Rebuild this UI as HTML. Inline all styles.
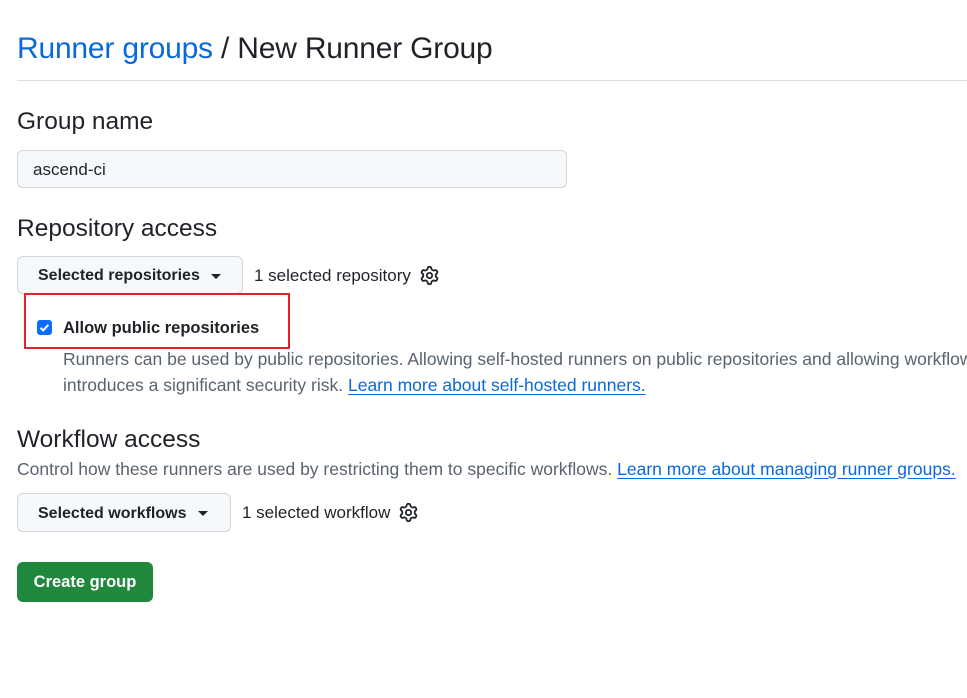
<!DOCTYPE html>
<html><head><style>
body{margin:0;width:967px;height:698px;overflow:hidden;background:#fff;font-family:"Liberation Sans",sans-serif;color:#1f2328;position:relative}
.a{position:absolute;white-space:nowrap}
a{color:#0969da;text-decoration:underline;text-underline-offset:3px}
.btn{position:absolute;background:#f6f8fa;border:1px solid #d0d7de;border-radius:6px;box-sizing:border-box;font-weight:bold;font-size:16px;display:flex;align-items:center;padding-left:20px;padding-top:2px}
.caret{display:inline-block;width:0;height:0;border-left:5px solid transparent;border-right:5px solid transparent;border-top:5px solid #1f2328;margin-left:11px}
.desc{color:#59636e;font-size:17.5px}
.h{font-size:24.5px}
</style></head><body>
<svg width="0" height="0" style="position:absolute"><defs><path id="g" fill="#1f2328" d="M8 0a8.2 8.2 0 0 1 .701.031C9.444.095 9.990.645 10.16 1.29l.288 1.107c.018.066.079.158.212.224.231.114.454.243.668.386.123.082.233.09.299.071l1.103-.303c.644-.176 1.392.021 1.820.63.27.385.506.792.704 1.218.315.675.111 1.422-.364 1.891l-.814.806c-.049.048-.098.147-.088.294.016.257.016.515 0 .772-.01.147.038.246.088.294l.814.806c.475.469.679 1.216.364 1.891a7.977 7.977 0 0 1-.704 1.217c-.428.61-1.176.807-1.820.63l-1.102-.302c-.067-.019-.177-.011-.3.071a5.909 5.909 0 0 1-.668.386c-.133.066-.194.158-.211.224l-.29 1.106c-.168.646-.715 1.196-1.458 1.26a8.006 8.006 0 0 1-1.402 0c-.743-.064-1.289-.614-1.458-1.26l-.289-1.106c-.018-.066-.079-.158-.212-.224a5.738 5.738 0 0 1-.668-.386c-.123-.082-.233-.09-.299-.071l-1.103.303c-.644.176-1.392-.021-1.820-.63a8.12 8.12 0 0 1-.704-1.218c-.315-.675-.111-1.422.363-1.891l.815-.806c.05-.048.098-.147.088-.294a6.214 6.214 0 0 1 0-.772c.01-.147-.038-.246-.088-.294l-.815-.806C.635 6.045.431 5.298.746 4.623a7.92 7.92 0 0 1 .704-1.217c.428-.61 1.176-.807 1.820-.63l1.102.302c.067.019.177.011.3-.071.214-.143.437-.272.668-.386.133-.066.194-.158.211-.224l.29-1.106C6.009.645 6.556.095 7.299.03 7.53.01 7.764 0 8 0Zm-.571 1.525c-.036.003-.108.036-.137.146l-.289 1.105c-.147.561-.549.967-.998 1.189-.173.086-.34.183-.5.29-.417.278-.97.423-1.529.27l-1.103-.303c-.109-.03-.175.016-.195.045-.22.312-.412.644-.573.99-.014.031-.021.11.059.19l.815.806c.411.406.562.957.53 1.456a4.709 4.709 0 0 0 0 .582c.032.499-.119 1.05-.53 1.456l-.815.806c-.081.08-.073.159-.059.19.162.346.353.677.573.989.02.03.085.076.195.046l1.102-.303c.56-.153 1.113-.008 1.530.27.161.107.328.204.501.29.447.222.85.629.997 1.189l.289 1.105c.029.109.101.143.137.146a6.6 6.6 0 0 0 1.142 0c.036-.003.108-.036.137-.146l.289-1.105c.147-.561.549-.967.998-1.189.173-.086.34-.183.5-.29.417-.278.97-.423 1.529-.27l1.103.303c.109.029.175-.016.195-.045.22-.313.411-.644.573-.99.014-.031.021-.11-.059-.19l-.815-.806c-.411-.406-.562-.957-.53-1.456a4.709 4.709 0 0 0 0-.582c-.032-.499.119-1.05.53-1.456l.815-.806c.081-.08.073-.159.059-.19a6.464 6.464 0 0 0-.573-.989c-.02-.03-.085-.076-.195-.046l-1.102.303c-.56.153-1.113.008-1.530-.27a4.44 4.440 0 0 0-.501-.29c-.447-.222-.85-.629-.997-1.189l-.289-1.105c-.029-.11-.101-.143-.137-.146a6.6 6.6 0 0 0-1.142 0ZM11 8a3 3 0 1 1-6 0 3 3 0 0 1 6 0ZM9.5 8a1.5 1.5 0 1 0-3.001.001A1.5 1.5 0 0 0 9.5 8Z"/></defs></svg>
<div class="a" style="left:17px;top:32px;font-size:30px;letter-spacing:-0.2px"><span style="color:#0969da">Runner groups</span> / New Runner Group</div>
<div class="a" style="left:17px;top:80px;width:950px;height:1px;background:#d8dee4"></div>
<div class="a h" style="left:17px;top:108px">Group name</div>
<div class="a" style="left:17px;top:150px;width:550px;height:38px;box-sizing:border-box;background:#f6f8fa;border:1px solid #d0d7de;border-radius:6px;font-size:17px;padding:9px 15px">ascend-ci</div>
<div class="a h" style="left:17px;top:215px">Repository access</div>
<div class="btn" style="left:17px;top:256px;width:226px;height:38px">Selected repositories<span class="caret"></span></div>
<div class="a" style="left:254px;top:266px;font-size:17px">1 selected repository</div>
<svg class="a" style="left:420px;top:266px" width="19" height="19" viewBox="0 0 16 16"><use href="#g"/></svg>
<div class="a" style="left:24px;top:293px;width:266px;height:56px;box-sizing:border-box;border:2px solid #e5202a"></div>
<svg class="a" style="left:37px;top:320px" width="15" height="15" viewBox="0 0 15 15"><rect width="15" height="15" rx="3" fill="#0b6cff"/><path d="M3.5 7.8l2.6 2.6 5.3-5.6" stroke="#fff" stroke-width="2" fill="none"/></svg>
<div class="a" style="left:63px;top:319px;font-size:16.5px;font-weight:bold">Allow public repositories</div>
<div class="a desc" style="left:63px;top:349px">Runners can be used by public repositories. Allowing self-hosted runners on public repositories and allowing workflows</div>
<div class="a desc" style="left:63px;top:375px">introduces a significant security risk. <a>Learn more about self-hosted runners.</a></div>
<div class="a h" style="left:17px;top:426px">Workflow access</div>
<div class="a desc" style="left:17px;top:459px">Control how these runners are used by restricting them to specific workflows. <a>Learn more about managing runner groups.</a></div>
<div class="btn" style="left:17px;top:493px;width:214px;height:39px">Selected workflows<span class="caret"></span></div>
<div class="a" style="left:242px;top:503px;font-size:17px">1 selected workflow</div>
<svg class="a" style="left:399px;top:503px" width="19" height="19" viewBox="0 0 16 16"><use href="#g"/></svg>
<div class="a" style="left:17px;top:562px;width:136px;height:40px;background:#1f883d;border-radius:6px;color:#fff;font-weight:bold;font-size:16.5px;display:flex;align-items:center;justify-content:center;padding-top:1px;box-sizing:border-box">Create group</div>
</body></html>
